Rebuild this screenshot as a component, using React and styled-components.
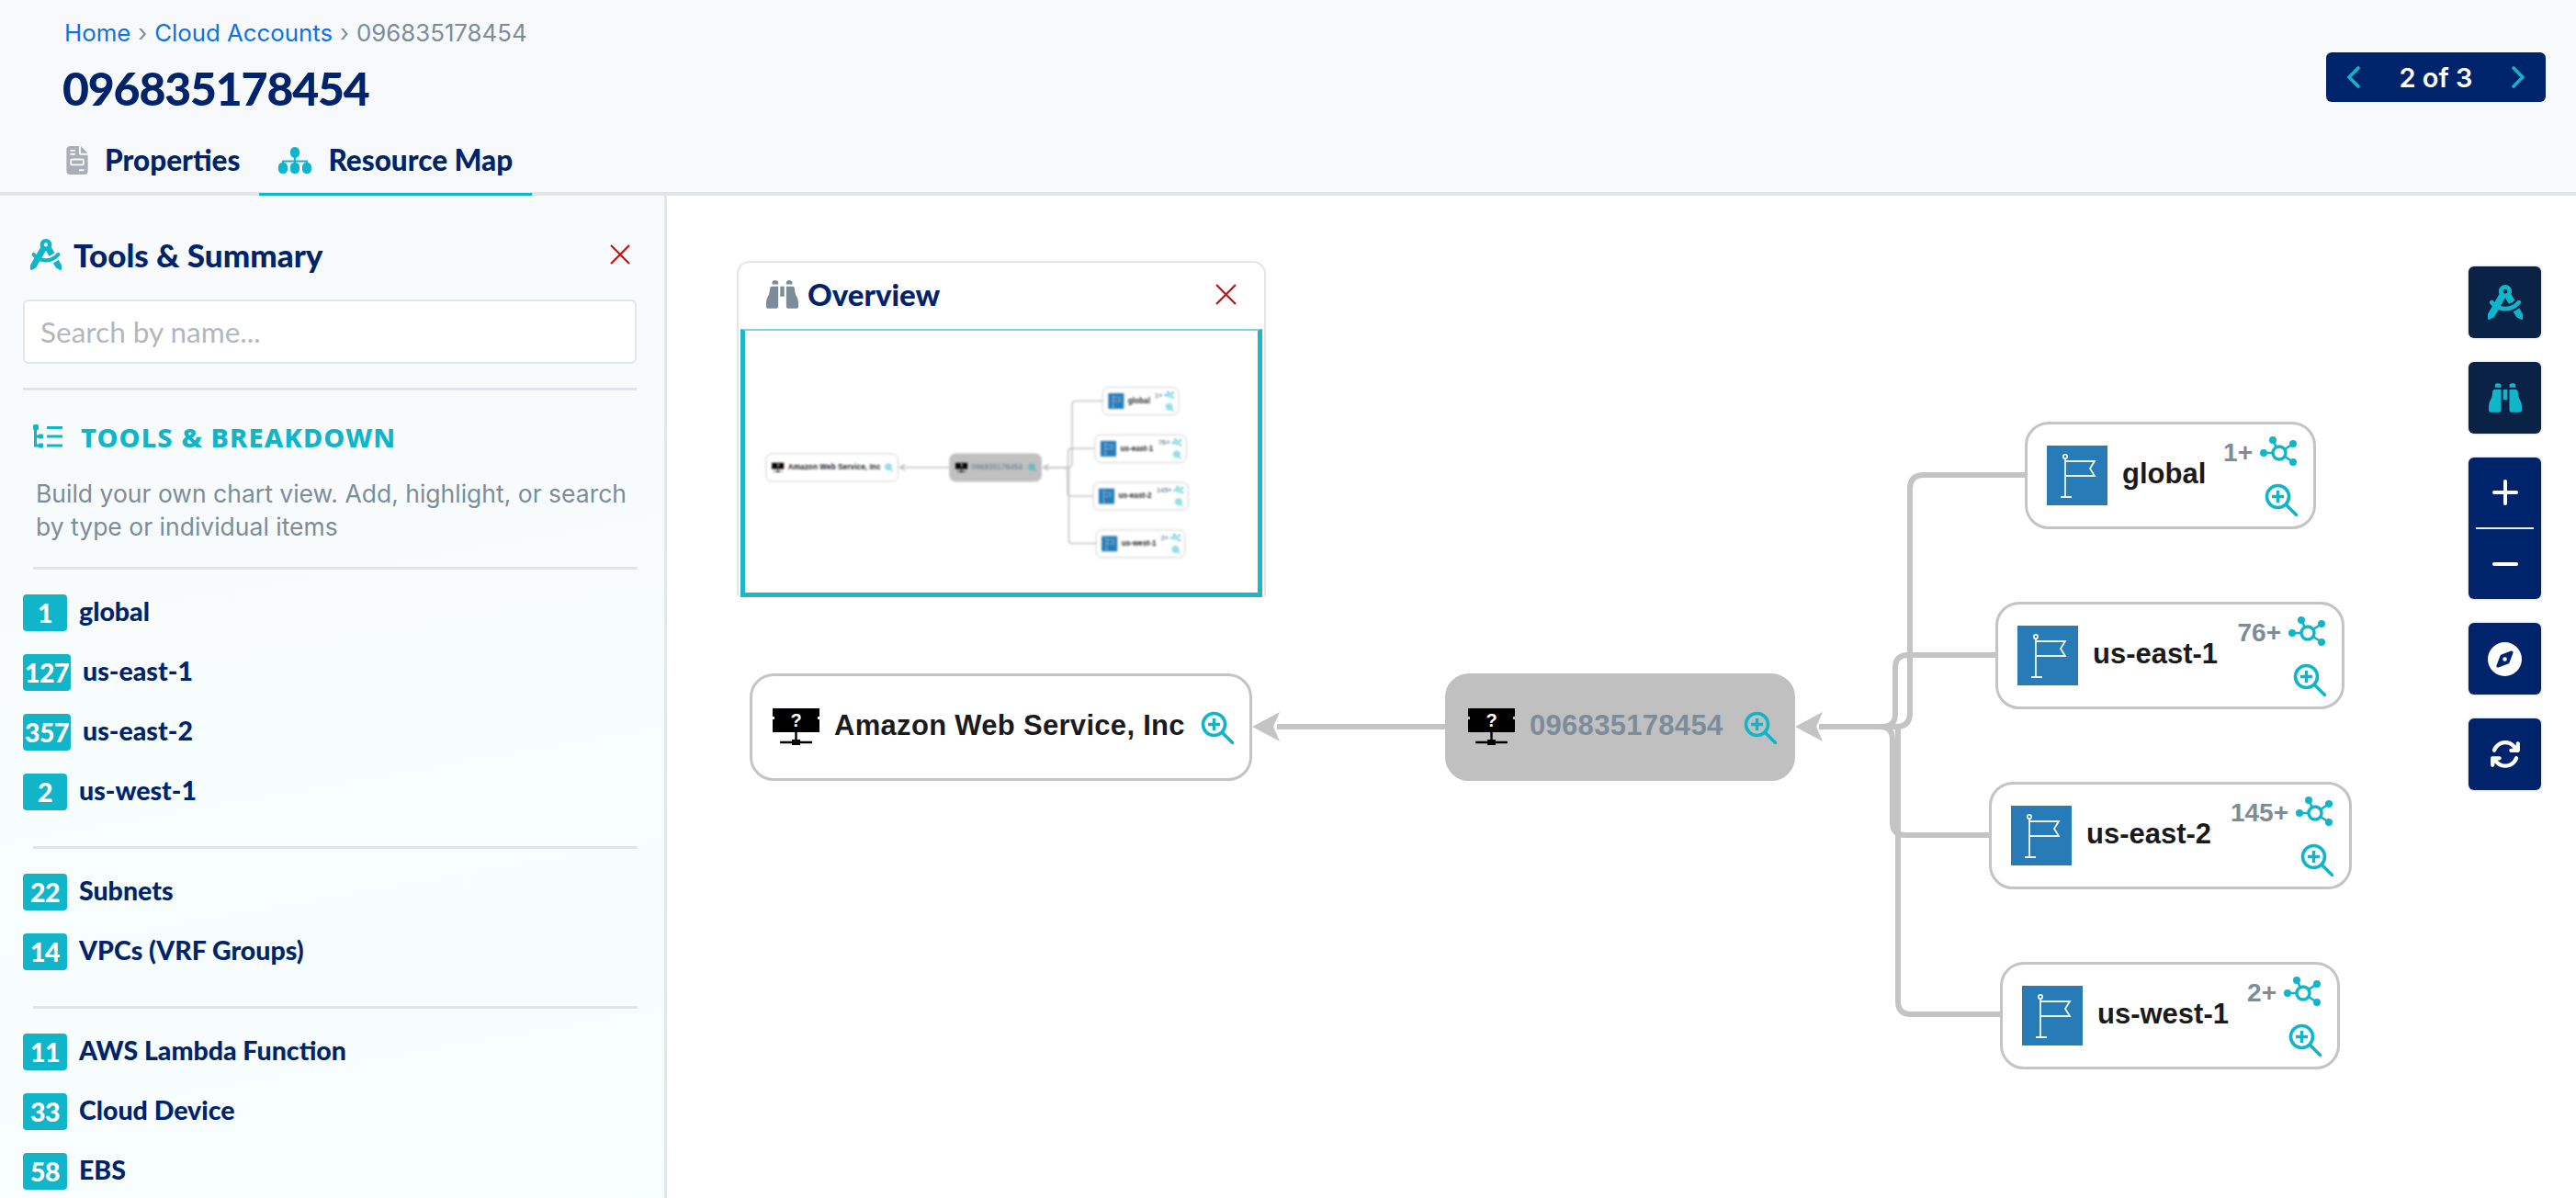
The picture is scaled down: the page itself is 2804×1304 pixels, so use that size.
import React from "react";
import styled, { createGlobalStyle } from "styled-components";
import {
  FaCompassDrafting,
  FaBinoculars,
  FaFileInvoice,
  FaCompass,
  FaArrowsRotate,
} from "react-icons/fa6";

const NAVY = "#00246b";
const TEAL = "#10b5c9";
const SLATE = "#7c8c9a";
const EDGE = "#c4c4c4";

const Global = createGlobalStyle`
  * { box-sizing: border-box; }
  html, body { margin: 0; padding: 0; background: #fff; }
  body { font-family: "Inter", "Liberation Sans", sans-serif; overflow: hidden; }
`;

const Page = styled.div`
  width: 2804px;
  height: 1304px;
  display: flex;
  flex-direction: column;
  overflow: hidden;
`;

const Header = styled.header`
  height: 213px;
  flex: none;
  background: #f8f9fb;
  border-bottom: 4px solid #e1e4e9;
  padding: 19px 33px 0 68px;
  display: flex;
  justify-content: space-between;
  align-items: flex-start;
`;

const HeaderLeft = styled.div`
  display: flex;
  flex-direction: column;
`;

const Crumbs = styled.nav`
  display: flex;
  align-items: center;
  gap: 8px;
  height: 32px;
  margin-left: 2px;
  font-size: 25.8px;
  color: ${SLATE};
`;

const Crumb = styled.a`
  color: #0a74e4;
`;

const Title = styled.h1`
  margin: 11px 0 0;
  font-family: "Lato", sans-serif;
  font-size: 50px;
  line-height: 68px;
  font-weight: 900;
  letter-spacing: -1.2px;
  color: ${NAVY};
`;

const Tabs = styled.div`
  display: flex;
  margin: 5px 0 -4px -17px;
`;

const Tab = styled.div`
  height: 78px;
  padding: 3px 21px 0;
  display: flex;
  align-items: center;
  gap: 18px;
  font-family: "Lato", sans-serif;
  font-size: 31.5px;
  font-weight: 900;
  color: ${NAVY};
  border-bottom: 3px solid ${(p) => (p.$active ? TEAL : "transparent")};
`;

const FileIcon = styled(FaFileInvoice)`
  width: 24px;
  height: 31px;
  color: #a9afb7;
`;

const Pager = styled.div`
  margin-top: 38px;
  width: 239px;
  height: 54px;
  padding: 0 23px;
  border-radius: 6px;
  background: ${NAVY};
  color: #fff;
  font-size: 29px;
  font-weight: 600;
  display: flex;
  align-items: center;
  justify-content: space-between;
`;

const Body = styled.div`
  flex: 1;
  display: flex;
  min-height: 0;
`;

const Sidebar = styled.aside`
  width: 726px;
  flex: none;
  padding: 44px 30px 0 25px;
  overflow: hidden;
  background: linear-gradient(170deg, #f8fafc, #f7fefe);
  border-right: 3px solid #e3e6ea;
`;

const PanelHead = styled.div`
  display: flex;
  align-items: center;
  justify-content: space-between;
  height: 40px;
  padding: 0 7px 0 8px;
`;

const PanelTitle = styled.h2`
  margin: 0;
  display: flex;
  align-items: center;
  gap: 13px;
  font-family: "Lato", sans-serif;
  font-size: 35px;
  font-weight: 900;
  color: ${NAVY};
`;

const Search = styled.input`
  display: block;
  width: 100%;
  height: 70px;
  margin-top: 29px;
  padding: 0 17px;
  background: #fff;
  border: 2px solid #e3e5e9;
  border-radius: 6px;
  font-family: "Lato", sans-serif;
  font-size: 31.5px;
  &::placeholder { color: #b3b7bd; }
`;

const Rule = styled.hr`
  margin: 0 0 0 ${(p) => (p.$inset ? "11px" : "0")};
  width: ${(p) => (p.$inset ? "658px" : "100%")};
  border: 0;
  height: 3px;
  background: #e1e4e9;
`;

const SearchRule = styled(Rule)`
  margin-top: 26px;
`;

const SectionHead = styled.div`
  display: flex;
  align-items: center;
  gap: 20px;
  height: 34px;
  margin: 33px 0 0 11px;
  font-family: "Noto Sans", sans-serif;
  font-size: 29px;
  font-weight: 800;
  letter-spacing: 1.1px;
  color: ${TEAL};
`;

const Description = styled.p`
  margin: 27px 0 26px 14px;
  font-size: 26.5px;
  line-height: 36px;
  color: ${SLATE};
  white-space: nowrap;
`;

const Group = styled.div`
  display: flex;
  flex-direction: column;
  gap: 25px;
  padding: 27px 0 39px;
`;

const Item = styled.div`
  display: flex;
  align-items: center;
  gap: 13px;
  font-family: "Lato", sans-serif;
  font-size: 28.5px;
  font-weight: 900;
  color: ${NAVY};
`;

const ItemLabel = styled.span`
  margin-top: -5px;
`;

const Chip = styled.span`
  min-width: 48px;
  height: 40px;
  padding: 0 2px;
  display: flex;
  align-items: center;
  justify-content: center;
  border-radius: 4px;
  background: ${TEAL};
  color: #fff;
  letter-spacing: -0.5px;
`;

const Main = styled.main`
  flex: 1;
  position: relative;
  overflow: hidden;
  background: #fff;
`;

/* page-sized drawing surface: the minimap reuses it at a smaller scale */
const Surface = styled.div`
  position: absolute;
  left: ${(p) => p.$left}px;
  top: ${(p) => p.$top}px;
  width: 2804px;
  height: 1304px;
  transform: scale(${(p) => p.$scale});
  transform-origin: 0 0;
  filter: ${(p) => (p.$blur ? `blur(${p.$blur}px)` : "none")};
  font-family: "Liberation Sans", Arial, sans-serif;
`;

const Edges = styled.svg`
  position: absolute;
  left: 0;
  top: 0;
`;

const Node = styled.div`
  position: absolute;
  left: ${(p) => p.$x}px;
  top: ${(p) => p.$y}px;
  width: ${(p) => p.$w}px;
  height: 117px;
  padding: 0 17px 0 ${(p) => (p.$region ? "21px" : "22px")};
  display: flex;
  align-items: center;
  gap: 16px;
  background: ${(p) => (p.$current ? "#c0c0c0" : "#fff")};
  border: 3px solid ${(p) => (p.$current ? "#c0c0c0" : EDGE)};
  border-radius: 26px;
`;

const NodeName = styled.span`
  flex: 1;
  padding-bottom: 3px;
  font-size: 31px;
  font-weight: 700;
  white-space: nowrap;
  letter-spacing: ${(p) => (p.$wide ? "0.3px" : "0")};
  color: ${(p) => (p.$current ? SLATE : "#1b1b1d")};
`;

const NodeSide = styled.div`
  display: flex;
  flex-direction: column;
  align-items: flex-end;
  gap: 17px;
`;

const Count = styled.div`
  display: flex;
  align-items: center;
  gap: 8px;
  font-size: 28px;
  font-weight: 700;
  line-height: 32px;
  color: ${SLATE};
`;

const CountValue = styled.span`
  margin-top: 3px;
`;

const Overview = styled.section`
  position: absolute;
  left: 76px;
  top: 71px;
  width: 576px;
  height: 366px;
  background: #fff;
  border: 2px solid #e6e6e6;
  border-bottom: 0;
  border-radius: 14px 14px 4px 4px;
  display: flex;
  flex-direction: column;
`;

const OverviewHead = styled.div`
  height: 72px;
  flex: none;
  padding: 0 30px 4px;
  display: flex;
  align-items: center;
  justify-content: space-between;
`;

const OverviewTitle = styled.h3`
  margin: 0;
  display: flex;
  align-items: center;
  gap: 10px;
  font-family: "Lato", sans-serif;
  font-size: 33px;
  font-weight: 900;
  color: ${NAVY};
`;

const Preview = styled.div`
  flex: 1;
  margin: 0 2px;
  position: relative;
  overflow: hidden;
  border: 5px solid #1fb5ca;
  border-top: 2px solid #7ed3e0;
`;

const Rail = styled.div`
  position: absolute;
  top: 77px;
  right: 38px;
  width: 79px;
  display: flex;
  flex-direction: column;
  gap: 26px;
`;

const RailButton = styled.button`
  width: 79px;
  height: ${(p) => (p.$tall ? "154px" : "78px")};
  padding: 0;
  border: 0;
  border-radius: 6px;
  background: ${(p) => (p.$dark ? "#0a2245" : NAVY)};
  color: ${(p) => (p.$dark ? TEAL : "#fff")};
  box-shadow: 0 0 3px rgba(0, 0, 0, 0.25);
  display: flex;
  flex-direction: column;
  align-items: center;
  justify-content: center;
`;

const ZoomStep = styled.div`
  flex: 1;
  width: 63px;
  display: flex;
  align-items: center;
  justify-content: center;
  & + & { border-top: 2px solid #e8ebf2; }
`;

const Cross = ({ size }) => (
  <svg width={size} height={size} viewBox="0 0 22 22" fill="none" stroke="#c8100f" strokeWidth="2.2">
    <path d="M1 1L21 21M21 1L1 21" />
  </svg>
);

const Chevron = ({ left }) => (
  <svg width="14" height="24" viewBox="0 0 14 24" fill="none" stroke={TEAL} strokeWidth="3.6" strokeLinecap="round" strokeLinejoin="round">
    <path d={left ? "M12 2L2 12L12 22" : "M2 2L12 12L2 22"} />
  </svg>
);

const SitemapIcon = () => (
  <svg width="36" height="29" viewBox="0 0 36 29" fill={TEAL}>
    <rect x="13" y="0" width="10" height="12" rx="5" />
    <path d="M18 11V18M5 19V15.5H31V19" fill="none" stroke={TEAL} strokeWidth="2.2" />
    <rect x="0" y="17" width="10" height="12" rx="4.5" />
    <rect x="13" y="17" width="10" height="12" rx="4.5" />
    <rect x="26" y="17" width="10" height="12" rx="4.5" />
  </svg>
);

const ListTreeIcon = () => (
  <svg width="32" height="26" viewBox="0 0 32 26" fill="none" stroke={TEAL} strokeWidth="3">
    <rect x="0" y="0" width="6" height="6" rx="1.5" fill={TEAL} stroke="none" />
    <path d="M2.5 4V23H7M2.5 13H7" />
    <rect x="6" y="10.5" width="5" height="5" rx="1" fill={TEAL} stroke="none" />
    <rect x="6" y="20.5" width="5" height="5" rx="1" fill={TEAL} stroke="none" />
    <path d="M15 3.5H32M15 13H32M15 23H32" />
  </svg>
);

const MonitorIcon = () => (
  <svg width="51" height="42" viewBox="0 0 51 42" style={{ flex: "none" }}>
    <path d="M0 0H51V9H49V12H51V26H0V12H2V9H0Z" fill="#000" />
    <path d="M25.5 26V37M8 37H43" stroke="#000" strokeWidth="2.4" />
    <rect x="21" y="34" width="9" height="6" fill="#000" />
    <text x="25.5" y="20" textAnchor="middle" fontFamily="Liberation Sans" fontWeight="700" fontSize="20" fill="#fff">?</text>
  </svg>
);

const FlagIcon = () => (
  <svg width="66" height="65" viewBox="0 0 66 65" style={{ flex: "none" }}>
    <rect width="66" height="65" fill="#277cb8" />
    <g fill="none" stroke="#eef5fa" strokeWidth="1.8">
      <circle cx="20" cy="12" r="2.2" />
      <path d="M20 14V56M15 56H27" />
      <path d="M20 17H52L47 25L52 33H20" />
    </g>
  </svg>
);

const ZoomIcon = () => (
  <svg width="36" height="36" viewBox="0 0 36 36" fill="none" stroke={TEAL} style={{ flex: "none" }}>
    <circle cx="14.5" cy="14.5" r="12" strokeWidth="3.6" />
    <path d="M14.5 8V21M8 14.5H21" strokeWidth="3.4" />
    <path d="M23.5 23.5L34.5 34.5" strokeWidth="3.6" strokeLinecap="round" />
  </svg>
);

const HubIcon = () => (
  <svg width="41" height="32" viewBox="0 0 41 32" fill={TEAL}>
    <g stroke={TEAL} strokeWidth="2.6">
      <path d="M14 4L21 18M36 8L21 18M4 18H21M36 28L21 18" />
    </g>
    <circle cx="21" cy="18" r="7" fill="#fff" stroke={TEAL} strokeWidth="3.4" />
    <circle cx="14" cy="4" r="4" />
    <circle cx="36" cy="8" r="4" />
    <circle cx="4" cy="18" r="4" />
    <circle cx="36" cy="28" r="4" />
  </svg>
);

const regions = [
  { name: "global", count: "1+", x: 2204, y: 459, w: 317 },
  { name: "us-east-1", count: "76+", x: 2172, y: 655, w: 380 },
  { name: "us-east-2", count: "145+", x: 2165, y: 851, w: 395 },
  { name: "us-west-1", count: "2+", x: 2177, y: 1047, w: 370 },
];

const Graph = ({ left, top, scale, blur }) => (
  <Surface $left={left} $top={top} $scale={scale} $blur={blur}>
    <Edges width="2804" height="1304" fill="none" stroke={EDGE} strokeWidth="6">
      <path d="M1390 791H1575" />
      <path d="M1363 791L1393 775L1386 791L1393 807Z" fill={EDGE} stroke="none" />
      <path d="M1980 791H2064Q2079 791 2079 776V532Q2079 517 2094 517H2206" />
      <path d="M1980 791H2049Q2063 791 2063 777V727Q2063 713 2077 713H2174" />
      <path d="M1980 791H2046Q2060 791 2060 805V895Q2060 909 2074 909H2167" />
      <path d="M2066 791V1090Q2066 1104 2080 1104H2179" />
      <path d="M1954 791L1984 775L1977 791L1984 807Z" fill={EDGE} stroke="none" />
    </Edges>
    <Node $x={816} $y={733} $w={547}>
      <MonitorIcon />
      <NodeName $wide>Amazon Web Service, Inc</NodeName>
      <ZoomIcon />
    </Node>
    <Node $x={1573} $y={733} $w={381} $current>
      <MonitorIcon />
      <NodeName $current $wide>096835178454</NodeName>
      <ZoomIcon />
    </Node>
    {regions.map((r) => (
      <Node key={r.name} $x={r.x} $y={r.y} $w={r.w} $region>
        <FlagIcon />
        <NodeName>{r.name}</NodeName>
        <NodeSide>
          <Count>
            <CountValue>{r.count}</CountValue>
            <HubIcon />
          </Count>
          <ZoomIcon />
        </NodeSide>
      </Node>
    ))}
  </Surface>
);

const groups = [
  [
    ["1", "global"],
    ["127", "us-east-1"],
    ["357", "us-east-2"],
    ["2", "us-west-1"],
  ],
  [
    ["22", "Subnets"],
    ["14", "VPCs (VRF Groups)"],
  ],
  [
    ["11", "AWS Lambda Function"],
    ["33", "Cloud Device"],
    ["58", "EBS"],
  ],
];

const App = () => (
  <Page>
    <Global />
    <Header>
      <HeaderLeft>
        <Crumbs>
          <Crumb>Home</Crumb>›<Crumb>Cloud Accounts</Crumb>›<span>096835178454</span>
        </Crumbs>
        <Title>096835178454</Title>
        <Tabs>
          <Tab>
            <FileIcon />
            Properties
          </Tab>
          <Tab $active>
            <SitemapIcon />
            Resource Map
          </Tab>
        </Tabs>
      </HeaderLeft>
      <Pager>
        <Chevron left />
        2 of 3
        <Chevron />
      </Pager>
    </Header>
    <Body>
      <Sidebar>
        <PanelHead>
          <PanelTitle>
            <FaCompassDrafting size={34} color={TEAL} />
            Tools &amp; Summary
          </PanelTitle>
          <Cross size={22} />
        </PanelHead>
        <Search placeholder="Search by name..." />
        <SearchRule />
        <SectionHead>
          <ListTreeIcon />
          TOOLS &amp; BREAKDOWN
        </SectionHead>
        <Description>
          Build your own chart view. Add, highlight, or search
          <br />
          by type or individual items
        </Description>
        {groups.map((items, i) => (
          <React.Fragment key={i}>
            <Rule $inset />
            <Group>
              {items.map(([count, label]) => (
                <Item key={label}>
                  <Chip>{count}</Chip>
                  <ItemLabel>{label}</ItemLabel>
                </Item>
              ))}
            </Group>
          </React.Fragment>
        ))}
      </Sidebar>
      <Main>
        <Graph left={-726} top={-213} scale={1} />
        <Overview>
          <OverviewHead>
            <OverviewTitle>
              <FaBinoculars size={35} color={SLATE} />
              Overview
            </OverviewTitle>
            <Cross size={23} />
          </OverviewHead>
          <Preview>
            <Graph left={-193} top={-60} scale={0.264} blur={4.5} />
          </Preview>
        </Overview>
        <Rail>
          <RailButton $dark>
            <FaCompassDrafting size={38} />
          </RailButton>
          <RailButton $dark>
            <FaBinoculars size={36} />
          </RailButton>
          <RailButton $tall>
            <ZoomStep>
              <svg width="28" height="28" viewBox="0 0 28 28" stroke="#fff" strokeWidth="4" strokeLinecap="round">
                <path d="M14 2V26M2 14H26" />
              </svg>
            </ZoomStep>
            <ZoomStep>
              <svg width="28" height="6" viewBox="0 0 28 6" stroke="#fff" strokeWidth="4" strokeLinecap="round">
                <path d="M2 3H26" />
              </svg>
            </ZoomStep>
          </RailButton>
          <RailButton>
            <FaCompass size={37} />
          </RailButton>
          <RailButton>
            <FaArrowsRotate size={34} />
          </RailButton>
        </Rail>
      </Main>
    </Body>
  </Page>
);

export default App;
